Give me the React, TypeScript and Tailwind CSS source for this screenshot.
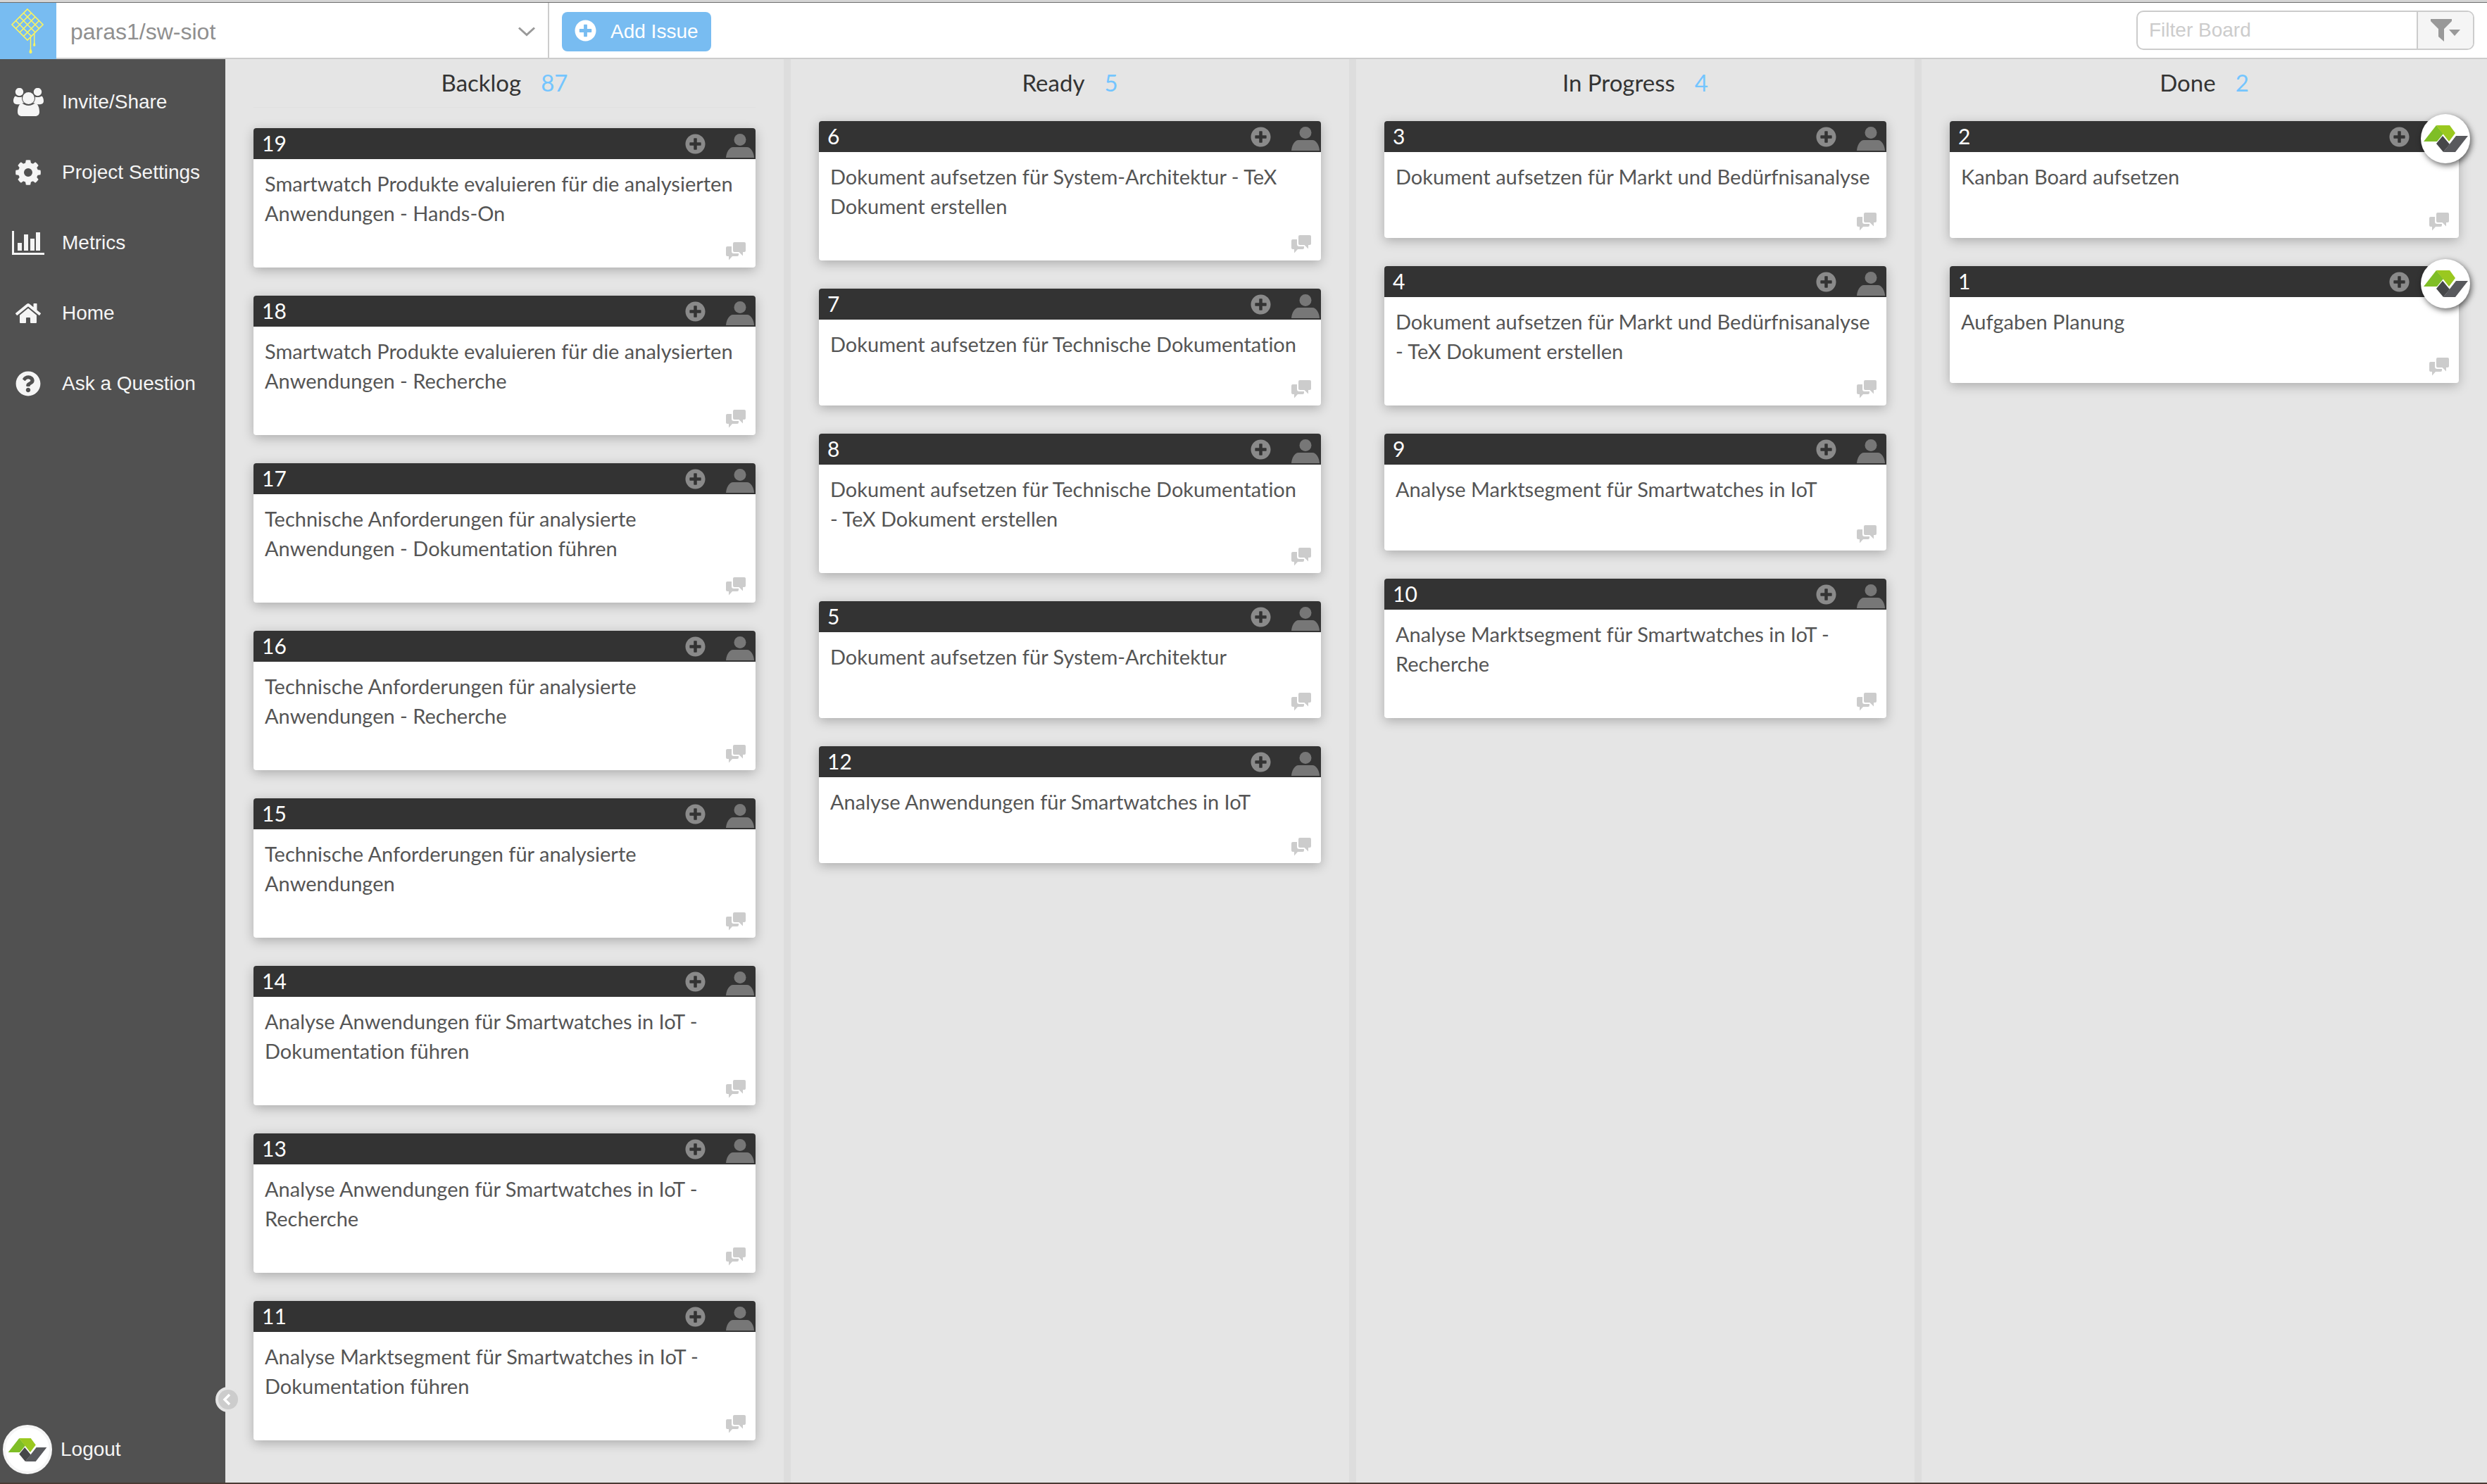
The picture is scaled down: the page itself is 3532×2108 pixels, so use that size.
import React from "react";
import { FaHome, FaQuestionCircle, FaPlusCircle } from "react-icons/fa";

type Issue = { id: number; title: string; avatar?: boolean };
type Column = { name: string; count: number; divider?: boolean; issues: Issue[] };

const columns: Column[] = [
  {
    name: "Backlog",
    count: 87,
    divider: true,
    issues: [
      { id: 19, title: "Smartwatch Produkte evaluieren für die analysierten Anwendungen - Hands-On" },
      { id: 18, title: "Smartwatch Produkte evaluieren für die analysierten Anwendungen - Recherche" },
      { id: 17, title: "Technische Anforderungen für analysierte Anwendungen - Dokumentation führen" },
      { id: 16, title: "Technische Anforderungen für analysierte Anwendungen - Recherche" },
      { id: 15, title: "Technische Anforderungen für analysierte Anwendungen" },
      { id: 14, title: "Analyse Anwendungen für Smartwatches in IoT - Dokumentation führen" },
      { id: 13, title: "Analyse Anwendungen für Smartwatches in IoT - Recherche" },
      { id: 11, title: "Analyse Marktsegment für Smartwatches in IoT - Dokumentation führen" },
    ],
  },
  {
    name: "Ready",
    count: 5,
    issues: [
      { id: 6, title: "Dokument aufsetzen für System-Architektur - TeX Dokument erstellen" },
      { id: 7, title: "Dokument aufsetzen für Technische Dokumentation" },
      { id: 8, title: "Dokument aufsetzen für Technische Dokumentation - TeX Dokument erstellen" },
      { id: 5, title: "Dokument aufsetzen für System-Architektur" },
      { id: 12, title: "Analyse Anwendungen für Smartwatches in IoT" },
    ],
  },
  {
    name: "In Progress",
    count: 4,
    issues: [
      { id: 3, title: "Dokument aufsetzen für Markt und Bedürfnisanalyse" },
      { id: 4, title: "Dokument aufsetzen für Markt und Bedürfnisanalyse - TeX Dokument erstellen" },
      { id: 9, title: "Analyse Marktsegment für Smartwatches in IoT" },
      { id: 10, title: "Analyse Marktsegment für Smartwatches in IoT - Recherche" },
    ],
  },
  {
    name: "Done",
    count: 2,
    issues: [
      { id: 2, title: "Kanban Board aufsetzen", avatar: true },
      { id: 1, title: "Aufgaben Planung", avatar: true },
    ],
  },
];

function WaffleLogo() {
  return (
    <svg viewBox="0 0 80 80" className="size-20" aria-hidden="true">
      <g fill="none" stroke="#fdf55f" strokeWidth="1.6">
        <path d="M39 9 61 31 39 53 17 31Z" />
        <path d="M33.500 14.500l22 22M28 20l22 22M22.500 25.500l22 22M44.500 14.500l-22 22M50 20l-22 22M55.500 25.500l-22 22" />
        <path d="M43.500 49v20M48.700 44v15" strokeWidth="1.400" />
      </g>
      <path d="M43.500 64c1 3 2 4.500 2 6a2 2 0 0 1-4 0c0-1.500 1-3 2-6ZM48.700 55c.8 2.500 1.600 4 1.600 5.200a1.600 1.600 0 0 1-3.200 0c0-1.200.8-2.700 1.600-5.200Z" fill="#fdf55f" />
    </svg>
  );
}

function UsersIcon() {
  return (
    <svg viewBox="0 0 43 40" className="h-10 w-[43px]" fill="currentColor" aria-hidden="true">
      <circle cx="8.500" cy="5.500" r="5.700" />
      <circle cx="34.500" cy="5.500" r="5.700" />
      <path d="M3 11.500c2 1.200 3.500 1.500 5.500 1.500 1.400 0 2.400-.2 3.600-.6-.4 3.600.6 6.600 2.900 8.900-2 .1-3.500.7-4.800 1.900H5C2 23.200 0 21.500 0 18.800 0 16 .8 12.300 3 11.500ZM40 11.500c-2 1.200-3.500 1.500-5.500 1.500-1.400 0-2.400-.2-3.600-.6.4 3.600-.6 6.600-2.900 8.900 2 .1 3.500.7 4.800 1.900H38c3 0 5-1.700 5-4.400 0-2.800-.8-6.500-3-7.300Z" />
      <circle cx="21.500" cy="14.500" r="8.500" />
      <path d="M12.500 21.800c2.500 2 5.500 3.200 9 3.200s6.500-1.200 9-3.200C35 22 37 28 37 34c0 3.700-2.300 6-6 6H12c-3.700 0-6-2.300-6-6 0-6 2-12 6.500-12.200Z" />
    </svg>
  );
}

function GearIcon() {
  return (
    <svg viewBox="0 0 36 36" className="size-9" aria-hidden="true">
      <circle cx="18" cy="18" r="10" fill="none" stroke="currentColor" strokeWidth="8" />
      <g fill="currentColor">
        {[0, 45, 90, 135, 180, 225, 270, 315].map((angle) => (
          <path key={angle} d="M14.800.5Q18-.2 21.200.5L22.300 7h-8.600Z" transform={`rotate(${angle} 18 18)`} />
        ))}
      </g>
    </svg>
  );
}

function MetricsIcon() {
  return (
    <svg viewBox="0 0 46 36" className="h-9 w-[46px]" fill="currentColor" aria-hidden="true">
      <path d="M0 1h3v31h43v3H0zM8 18h6v11H8zM17 6h6v23h-6zM26 12h6v17h-6zM34 3h6v26h-6z" />
    </svg>
  );
}

function ChatIcon() {
  return (
    <svg viewBox="0 0 28 26" className="h-[26px] w-7" fill="#cccccc" aria-hidden="true">
      <path d="M12 0h14a2 2 0 0 1 2 2v10a2 2 0 0 1-2 2h-2v5.500L18.500 14H12a2 2 0 0 1-2-2V2a2 2 0 0 1 2-2Z" />
      <path d="M2 6h6v7a3 3 0 0 0 3 3h7v2a2 2 0 0 1-2 2H9l-5 5.500V20H2a2 2 0 0 1-2-2V8a2 2 0 0 1 2-2Z" />
    </svg>
  );
}

function PersonIcon() {
  return (
    <svg viewBox="0 0 40 34" className="h-[34px] w-10" fill="#777777" aria-hidden="true">
      <circle cx="20" cy="8.500" r="8.500" />
      <path d="M0 34c.5-8 5-15 10-15h20c5 0 9.500 7 10 15Z" />
    </svg>
  );
}

function AvatarMark({ className }: { className: string }) {
  return (
    <svg viewBox="0 0 63 38" className={className} aria-hidden="true">
      <path d="M0 23 18 0l10 12-9 11Z" fill="#7fbe26" />
      <path d="M18 0h19l8 11-9 12Z" fill="#9ac81f" />
      <path d="m27 15 10 12-9 11L18 26Z" fill="#464749" />
      <path d="M46 15h17L45 38H28Z" fill="#58595d" />
    </svg>
  );
}

const navItems = [
  { label: "Invite/Share", icon: <UsersIcon /> },
  { label: "Project Settings", icon: <GearIcon /> },
  { label: "Metrics", icon: <MetricsIcon /> },
  { label: "Home", icon: <FaHome className="size-9" /> },
  { label: "Ask a Question", icon: <FaQuestionCircle className="size-9" /> },
];

function Card({ issue }: { issue: Issue }) {
  return (
    <article className="relative flex flex-col rounded-[4px] bg-white shadow-[0_4px_16px_rgba(0,0,0,0.25)]">
      <header className="flex h-11 items-center rounded-t-[4px] bg-[#333333] pr-0.5 pl-3">
        <a href="#" className="pb-0.5 text-[30px] leading-none text-white">{issue.id}</a>
        <button type="button" aria-label="Add label" className={issue.avatar ? "mr-[68px] ml-auto text-[#8a8a8a]" : "mr-[29px] ml-auto text-[#8a8a8a]"}>
          <FaPlusCircle className="size-[29px]" />
        </button>
        {!issue.avatar && (
          <button type="button" aria-label="Assign" className="self-end pb-0.5">
            <PersonIcon />
          </button>
        )}
      </header>
      {issue.avatar && (
        <button type="button" aria-label="Assignee" className="absolute -top-2.5 -right-4 flex size-[70px] items-center justify-center rounded-full bg-white shadow-[2px_3px_8px_rgba(0,0,0,0.6)]">
          <AvatarMark className="h-[38px] w-[63px]" />
        </button>
      )}
      <div className="min-h-[122px] pt-3.5 pr-5 pb-14 pl-4">
        <p className="text-[29px] leading-[42px] text-[#555555] [font-variant-ligatures:none]">{issue.title}</p>
      </div>
      <button type="button" aria-label="Comments" className="absolute right-3.5 bottom-2.5">
        <ChatIcon />
      </button>
    </article>
  );
}

export default function App() {
  return (
    <div className="flex min-h-screen flex-col border-t-[3px] border-b-2 border-t-[#d5d5d5] border-b-[#4a3a34] bg-[#e5e5e5] font-['Liberation_Sans',Arial,sans-serif]">
      <header className="flex h-[81px] shrink-0 border-t border-t-[#6d6d6d] bg-white">
        <a href="#" aria-label="Boards" className="bg-[#78bcf1]">
          <WaffleLogo />
        </a>
        <div className="flex flex-1 items-center border-b-2 border-[#cccccc]">
          <button type="button" className="flex h-full w-[700px] items-center justify-between border-r-2 border-[#cccccc] pt-1 pr-[18px] pl-5 text-[32px] text-[#8f8f8f]">
            paras1/sw-siot
            <svg viewBox="0 0 24 14" className="h-3.5 w-6" fill="none" stroke="#999999" strokeWidth="3" aria-hidden="true">
              <path d="m1 1.500 11 10 11-10" />
            </svg>
          </button>
          <button type="button" className="mt-1 ml-[18px] flex h-14 items-center gap-5 rounded-lg bg-[#78bcf1] px-[18px] text-[28px] text-white">
            <FaPlusCircle className="mb-1 size-[31px]" />
            Add Issue
          </button>
          <div className="mr-[18px] ml-auto flex h-14 w-[480px] overflow-hidden rounded-[10px] border-2 border-[#cccccc]">
            <input aria-label="Filter Board" placeholder="Filter Board" className="min-w-0 flex-1 px-4 text-[28px] text-[#555555] outline-none placeholder:text-[#cccccc]" />
            <button type="button" aria-label="Filter options" className="flex w-20 items-center justify-center border-l-2 border-[#cccccc] bg-[#f5f5f5]">
              <svg viewBox="0 0 42 32" className="h-8 w-[42px]" fill="#999999" aria-hidden="true">
                <path d="M0 0h30v3L19 14v18l-8-7V14L0 3ZM26 15h16l-8 9Z" />
              </svg>
            </button>
          </div>
        </div>
      </header>
      <div className="flex flex-1">
        <nav className="relative flex w-80 shrink-0 flex-col bg-[#515151] pt-[11px] text-[28px] text-[#f5f5f5]">
          {navItems.map((item) => (
            <a key={item.label} href="#" className="flex h-[100px] items-center gap-2">
              <span className="flex w-20 items-center justify-center">{item.icon}</span>
              {item.label}
            </a>
          ))}
          <a href="#" className="mt-auto mb-3 flex items-center gap-3 pl-1">
            <span className="flex size-[70px] items-center justify-center rounded-full border-4 border-[#f5f5f5] bg-white">
              <AvatarMark className="h-[33px] w-14" />
            </span>
            Logout
          </a>
          <button type="button" aria-label="Collapse sidebar" className="absolute -right-[18px] bottom-[104px] flex size-7 items-center justify-center rounded-full bg-[#cccccc] ring-4 ring-[#e5e5e5]">
            <svg viewBox="0 0 12 18" className="mr-1 h-[18px] w-3" fill="none" stroke="#ffffff" strokeWidth="3.500" aria-hidden="true">
              <path d="m10 2-7 7 7 7" />
            </svg>
          </button>
        </nav>
        <main className="grid min-w-0 flex-1 grid-cols-4 font-[Lato,sans-serif]">
          {columns.map((col) => (
            <section key={col.name} className="flex min-w-0 flex-col border-r-[10px] border-[#dddddd] px-10 last:border-r-0">
              <h2 className="flex h-[68px] items-center justify-center gap-7 text-[33px] text-[#333333]">
                {col.name}
                <span className="text-[#74c5ff]">{col.count}</span>
              </h2>
              <div className={col.divider ? "mb-[29px] h-px bg-[#e0e0e0]" : "mb-5"} />
              <div className="flex flex-col gap-10">
                {col.issues.map((issue) => (
                  <Card key={issue.id} issue={issue} />
                ))}
              </div>
            </section>
          ))}
        </main>
      </div>
    </div>
  );
}
